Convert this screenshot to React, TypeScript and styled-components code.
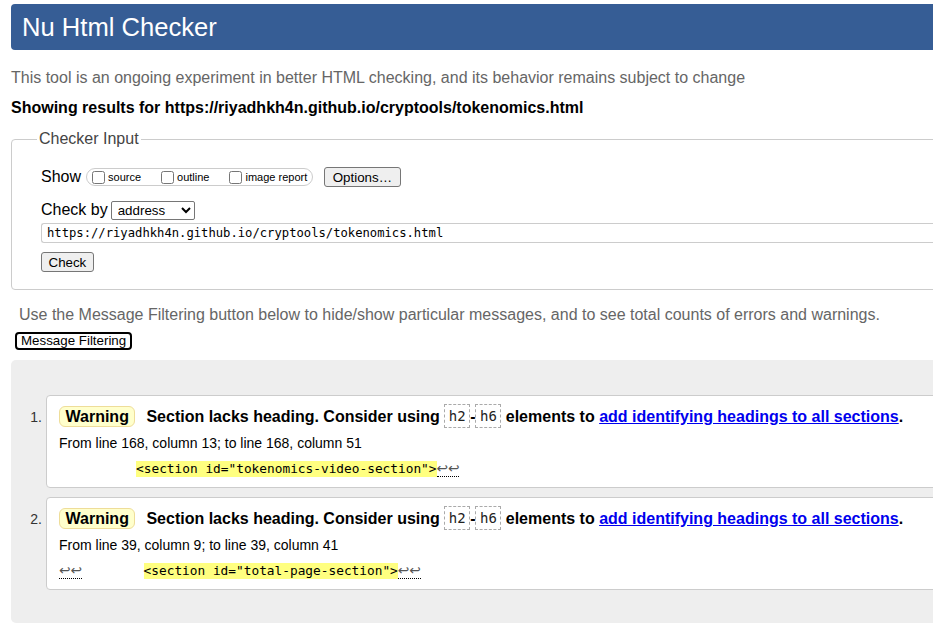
import React from 'react'
import styled, { createGlobalStyle } from 'styled-components'

const GlobalStyle = createGlobalStyle`
    html, body {
        margin: 0;
        padding: 0;
        overflow: hidden;
        background: #fff;
    }
    body {
        font-family: "Liberation Sans", Arial, sans-serif;
        color: #000;
    }
`

const StyledPage = styled.div`
    width: 1000px;
    display: flex;
    flex-direction: column;
    align-items: flex-start;
`

const StyledHeader = styled.h1`
    align-self: stretch;
    margin: 4px 0 0 11px;
    height: 46px;
    line-height: 46px;
    padding-left: 11px;
    background: #365d95;
    border-radius: 4px;
    color: #fff;
    font-size: 25.6px;
    font-weight: normal;
`

const StyledIntro = styled.p`
    margin: 19px 0 0 11px;
    line-height: 18px;
    font-size: 16px;
    color: #666;
`

const StyledResultsFor = styled.p`
    margin: 12px 0 0 11px;
    line-height: 18px;
    font-size: 16px;
    font-weight: bold;
`

const StyledFieldset = styled.fieldset`
    align-self: stretch;
    margin: 13px 0 0 11px;
    padding: 18px 0 17px 29px;
    border: 1px solid #ccc;
    border-radius: 4px;
    display: flex;
    flex-direction: column;
    align-items: flex-start;
`

const StyledLegend = styled.legend`
    padding: 0 2px;
    margin-left: -4px;
    font-size: 16px;
    line-height: 18px;
    color: #444;
`

const StyledRow = styled.div<{ $top?: number }>`
    display: flex;
    align-items: center;
    height: 22px;
    margin-top: ${p => p.$top ?? 0}px;
    font-size: 16px;
`

const StyledToggleGroup = styled.span`
    display: flex;
    align-items: center;
    box-sizing: border-box;
    height: 18px;
    margin-left: 5px;
    padding: 0 5px 0 1px;
    border: 1px solid #ccc;
    border-radius: 9px;
`

const StyledToggle = styled.label<{ $last?: boolean }>`
    display: flex;
    align-items: center;
    font-size: 11px;
    margin-right: ${p => (p.$last ? 0 : 16)}px;
    input {
        margin: 0 3px 0 4px;
        width: 13px;
        height: 13px;
    }
`

const StyledButton = styled.button`
    box-sizing: border-box;
    height: 20px;
    padding: 0 6.5px;
    font-family: "Liberation Sans", Arial, sans-serif;
    font-size: 13.33px;
    color: #000;
    background: #efefef;
    border: 1px solid #767676;
    border-radius: 3px;
`

const StyledOptions = styled(StyledButton)`
    margin-left: 11px;
    padding: 0 7.5px;
`

const StyledSelect = styled.select`
    box-sizing: border-box;
    margin-left: 3px;
    width: 84px;
    height: 19px;
    padding: 0 0 0 2px;
    font-family: "Liberation Sans", Arial, sans-serif;
    font-size: 13.33px;
    color: #000;
    background: #fff;
    border: 1px solid #767676;
    border-radius: 2px;
`

const StyledUrlInput = styled.input`
    box-sizing: border-box;
    align-self: stretch;
    margin-top: 2px;
    height: 20px;
    padding: 0 0 0 5px;
    font-family: "DejaVu Sans Mono", "Liberation Mono", monospace;
    font-size: 12.2px;
    color: #000;
    border: 1px solid #ccc;
    border-right: none;
    border-radius: 3px 0 0 3px;
    outline: none;
`

const StyledCheck = styled(StyledButton)`
    margin-top: 9px;
`

const StyledHint = styled.p`
    margin: 16px 0 0 19px;
    line-height: 18px;
    font-size: 16px;
    color: #666;
`

const StyledFilterButton = styled.button`
    box-sizing: border-box;
    margin: 8px 0 0 15px;
    height: 18px;
    padding: 0 4px;
    font-family: "Liberation Sans", Arial, sans-serif;
    font-size: 13.33px;
    line-height: 14px;
    color: #000;
    background: #fff;
    border: 2px solid #000;
    border-radius: 4px;
`

const StyledResults = styled.ol`
    align-self: stretch;
    margin: 10px 0 0 11px;
    padding: 35px 0 33px 0;
    background: #eee;
    border-radius: 5px;
    list-style: none;
    display: flex;
    flex-direction: column;
    gap: 9px;
`

const StyledItem = styled.li`
    display: flex;
    align-items: flex-start;
`

const StyledNumber = styled.span`
    box-sizing: border-box;
    width: 35px;
    padding: 13px 4px 0 0;
    text-align: right;
    font-size: 14px;
    line-height: 18px;
    color: #333;
`

const StyledCard = styled.div`
    flex: 1;
    padding: 9px 12px 8px 12px;
    background: #fff;
    border: 1px solid #ccc;
    border-radius: 4px;
`

const StyledMessage = styled.p`
    margin: 0;
    font-size: 16px;
    line-height: 24px;
    font-weight: bold;
    white-space: nowrap;
`

const StyledBadge = styled.span`
    display: inline-block;
    vertical-align: middle;
    margin: -3px 11px 0 0;
    padding: 0 5.5px;
    line-height: 19px;
    background: #ffffcc;
    border: 1px solid #eedd99;
    border-radius: 6px;
`

const StyledElement = styled.code`
    display: inline-block;
    vertical-align: top;
    margin-top: -1px;
    padding: 0 3.5px;
    line-height: 22px;
    font-family: "DejaVu Sans Mono", "Liberation Mono", monospace;
    font-size: 14px;
    font-weight: normal;
    color: #222;
    border: 1px dashed #aaa;
`

const StyledLink = styled.a`
    color: #0000ee;
    text-decoration: underline;
`

const StyledLocation = styled.p`
    margin: 5px 0 0 0;
    font-size: 14px;
    line-height: 18px;
`

const StyledExtract = styled.p`
    margin: 7px 0 0 0;
    line-height: 20px;
    white-space: pre;
    font-family: "DejaVu Sans Mono", "Liberation Mono", monospace;
    font-size: 12.8px;
`

const StyledHighlight = styled.span`
    display: inline-block;
    line-height: 16px;
    background: #ffff80;
`

const StyledBreaks = styled.span`
    display: inline-block;
    line-height: 16px;
    font-family: "DejaVu Sans", sans-serif;
    font-size: 13.7px;
    color: #555;
    border-bottom: 1px dotted #000;
`

interface Warning {
    from: string
    before: string
    lead: string
    code: string
}

const warnings: Warning[] = [
    {
        from: 'From line 168, column 13; to line 168, column 51',
        before: '',
        lead: '          ',
        code: '<section id="tokenomics-video-section">',
    },
    {
        from: 'From line 39, column 9; to line 39, column 41',
        before: '↩↩',
        lead: '        ',
        code: '<section id="total-page-section">',
    },
]

const WarningItem = (props: { index: number; warning: Warning }) => {
    const { warning } = props
    return (
        <StyledItem>
            <StyledNumber>{props.index}.</StyledNumber>
            <StyledCard>
                <StyledMessage>
                    <StyledBadge>Warning</StyledBadge>Section lacks heading. Consider using{' '}
                    <StyledElement>h2</StyledElement>-<StyledElement>h6</StyledElement> elements to{' '}
                    <StyledLink href="#">add identifying headings to all sections</StyledLink>.
                </StyledMessage>
                <StyledLocation>{warning.from}</StyledLocation>
                <StyledExtract>
                    {warning.before && <StyledBreaks>{warning.before}</StyledBreaks>}
                    {warning.lead}
                    <StyledHighlight>{warning.code}</StyledHighlight>
                    <StyledBreaks>↩↩</StyledBreaks>
                </StyledExtract>
            </StyledCard>
        </StyledItem>
    )
}

const App = () => {
    return (
        <StyledPage>
            <GlobalStyle />
            <StyledHeader>Nu Html Checker</StyledHeader>
            <StyledIntro>
                This tool is an ongoing experiment in better HTML checking, and its behavior remains subject to change
            </StyledIntro>
            <StyledResultsFor>Showing results for https://riyadhkh4n.github.io/cryptools/tokenomics.html</StyledResultsFor>

            <StyledFieldset>
                <StyledLegend>Checker Input</StyledLegend>
                <StyledRow>
                    Show
                    <StyledToggleGroup>
                        {['source', 'outline', 'image report'].map((name, i) => (
                            <StyledToggle key={name} $last={i === 2}>
                                <input type="checkbox" />
                                {name}
                            </StyledToggle>
                        ))}
                    </StyledToggleGroup>
                    <StyledOptions>Options…</StyledOptions>
                </StyledRow>
                <StyledRow $top={11}>
                    Check by
                    <StyledSelect defaultValue="address">
                        <option value="address">address</option>
                        <option value="file">file upload</option>
                        <option value="text">text input</option>
                    </StyledSelect>
                </StyledRow>
                <StyledUrlInput defaultValue="https://riyadhkh4n.github.io/cryptools/tokenomics.html" />
                <StyledCheck>Check</StyledCheck>
            </StyledFieldset>

            <StyledHint>
                Use the Message Filtering button below to hide/show particular messages, and to see total counts of errors and warnings.
            </StyledHint>
            <StyledFilterButton>Message Filtering</StyledFilterButton>

            <StyledResults>
                {warnings.map((w, i) => (
                    <WarningItem key={i} index={i + 1} warning={w} />
                ))}
            </StyledResults>
        </StyledPage>
    )
}

export default App
